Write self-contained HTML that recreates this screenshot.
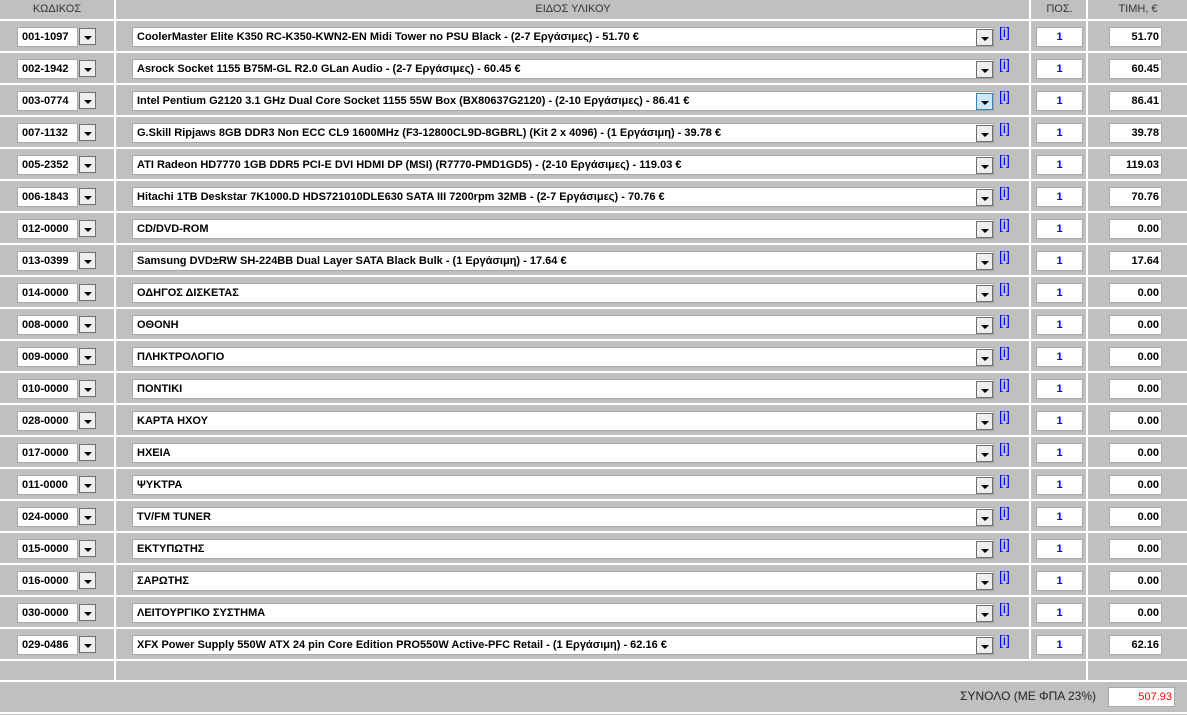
<!DOCTYPE html>
<html><head><meta charset="utf-8"><style>
*{margin:0;padding:0;box-sizing:border-box}
body{width:1187px;height:715px;background:#c0c0c0;position:relative;overflow:hidden;font-family:"Liberation Sans",Tahoma,sans-serif;font-size:11px}
.h{position:absolute;background:#fff}
.hd{position:absolute;top:3px;color:#333;font-size:11px;text-align:center}
.r{position:absolute;left:0;width:1187px;height:32px}
.c,.s,.q,.p{position:absolute;top:6px;height:20px;background:#fff;border:1px solid #a9a9a9;font-weight:bold;line-height:18px;padding-left:4px;color:#000;white-space:nowrap;overflow:hidden}
.c{left:17px;width:61px}
.b{position:absolute;left:79px;top:7px;width:17px;height:17px;background:#eee;border:1px solid #707070}
.b::after,.sb::after{content:"";position:absolute;left:4px;top:7px;border-left:4px solid transparent;border-right:4px solid transparent;border-top:4px solid #000}
.s{left:132px;width:862px}
.sb{position:absolute;left:976px;top:8px;width:17px;height:17px;background:#eee;border:1px solid #707070}
.i{position:absolute;left:999px;top:3px;color:#00f;font-size:14px}
.q{left:1036px;width:47px;text-align:center;color:#00f;padding:0}
.p{left:1109px;width:53px;text-align:right;padding:0 2px 0 0}
</style></head><body>
<div class="hd" style="left:0;width:114px">ΚΩΔΙΚΟΣ</div>
<div class="hd" style="left:116px;width:914px">ΕΙΔΟΣ ΥΛΙΚΟΥ</div>
<div class="hd" style="left:1032px;width:55px">ΠΟΣ.</div>
<div class="hd" style="left:1089px;width:98px">ΤΙΜΗ, €</div>
<div class="h" style="left:114px;top:0;width:2px;height:681px"></div>
<div class="h" style="left:1029px;top:0;width:2px;height:661px"></div>
<div class="h" style="left:1086px;top:0;width:2px;height:681px"></div>
<div class="h" style="left:0;width:1187px;top:19px;height:2px"></div>
<div class="h" style="left:0;width:1187px;top:51px;height:2px"></div>
<div class="h" style="left:0;width:1187px;top:83px;height:2px"></div>
<div class="h" style="left:0;width:1187px;top:115px;height:2px"></div>
<div class="h" style="left:0;width:1187px;top:147px;height:2px"></div>
<div class="h" style="left:0;width:1187px;top:179px;height:2px"></div>
<div class="h" style="left:0;width:1187px;top:211px;height:2px"></div>
<div class="h" style="left:0;width:1187px;top:243px;height:2px"></div>
<div class="h" style="left:0;width:1187px;top:275px;height:2px"></div>
<div class="h" style="left:0;width:1187px;top:307px;height:2px"></div>
<div class="h" style="left:0;width:1187px;top:339px;height:2px"></div>
<div class="h" style="left:0;width:1187px;top:371px;height:2px"></div>
<div class="h" style="left:0;width:1187px;top:403px;height:2px"></div>
<div class="h" style="left:0;width:1187px;top:435px;height:2px"></div>
<div class="h" style="left:0;width:1187px;top:467px;height:2px"></div>
<div class="h" style="left:0;width:1187px;top:499px;height:2px"></div>
<div class="h" style="left:0;width:1187px;top:531px;height:2px"></div>
<div class="h" style="left:0;width:1187px;top:563px;height:2px"></div>
<div class="h" style="left:0;width:1187px;top:595px;height:2px"></div>
<div class="h" style="left:0;width:1187px;top:627px;height:2px"></div>
<div class="h" style="left:0;width:1187px;top:659px;height:2px"></div>
<div class="h" style="left:0;width:1187px;top:680px;height:2px"></div>
<div class="h" style="left:0;width:1187px;top:712px;height:2px"></div>

<div class="r" style="top:21px"><div class="c">001-1097</div><div class="b"></div><div class="s">CoolerMaster Elite K350 RC-K350-KWN2-EN Midi Tower no PSU Black - (2-7 Εργάσιμες) - 51.70 €</div><div class="sb"></div><div class="i">[i]</div><div class="q">1</div><div class="p">51.70</div></div>
<div class="r" style="top:53px"><div class="c">002-1942</div><div class="b"></div><div class="s">Asrock Socket 1155 B75M-GL R2.0 GLan Audio - (2-7 Εργάσιμες) - 60.45 €</div><div class="sb"></div><div class="i">[i]</div><div class="q">1</div><div class="p">60.45</div></div>
<div class="r" style="top:85px"><div class="c">003-0774</div><div class="b"></div><div class="s">Intel Pentium G2120 3.1 GHz Dual Core Socket 1155 55W Box (BX80637G2120) - (2-10 Εργάσιμες) - 86.41 €</div><div class="sb" style="background:#cde8f8;border-color:#3c7fb1"></div><div class="i">[i]</div><div class="q">1</div><div class="p">86.41</div></div>
<div class="r" style="top:117px"><div class="c">007-1132</div><div class="b"></div><div class="s">G.Skill Ripjaws 8GB DDR3 Non ECC CL9 1600MHz (F3-12800CL9D-8GBRL) (Kit 2 x 4096) - (1 Εργάσιμη) - 39.78 €</div><div class="sb"></div><div class="i">[i]</div><div class="q">1</div><div class="p">39.78</div></div>
<div class="r" style="top:149px"><div class="c">005-2352</div><div class="b"></div><div class="s">ATI Radeon HD7770 1GB DDR5 PCI-E DVI HDMI DP (MSI) (R7770-PMD1GD5) - (2-10 Εργάσιμες) - 119.03 €</div><div class="sb"></div><div class="i">[i]</div><div class="q">1</div><div class="p">119.03</div></div>
<div class="r" style="top:181px"><div class="c">006-1843</div><div class="b"></div><div class="s">Hitachi 1TB Deskstar 7K1000.D HDS721010DLE630 SATA III 7200rpm 32MB - (2-7 Εργάσιμες) - 70.76 €</div><div class="sb"></div><div class="i">[i]</div><div class="q">1</div><div class="p">70.76</div></div>
<div class="r" style="top:213px"><div class="c">012-0000</div><div class="b"></div><div class="s">CD/DVD-ROM</div><div class="sb"></div><div class="i">[i]</div><div class="q">1</div><div class="p">0.00</div></div>
<div class="r" style="top:245px"><div class="c">013-0399</div><div class="b"></div><div class="s">Samsung DVD±RW SH-224BB Dual Layer SATA Black Bulk - (1 Εργάσιμη) - 17.64 €</div><div class="sb"></div><div class="i">[i]</div><div class="q">1</div><div class="p">17.64</div></div>
<div class="r" style="top:277px"><div class="c">014-0000</div><div class="b"></div><div class="s">ΟΔΗΓΟΣ ΔΙΣΚΕΤΑΣ</div><div class="sb"></div><div class="i">[i]</div><div class="q">1</div><div class="p">0.00</div></div>
<div class="r" style="top:309px"><div class="c">008-0000</div><div class="b"></div><div class="s">ΟΘΟΝΗ</div><div class="sb"></div><div class="i">[i]</div><div class="q">1</div><div class="p">0.00</div></div>
<div class="r" style="top:341px"><div class="c">009-0000</div><div class="b"></div><div class="s">ΠΛΗΚΤΡΟΛΟΓΙΟ</div><div class="sb"></div><div class="i">[i]</div><div class="q">1</div><div class="p">0.00</div></div>
<div class="r" style="top:373px"><div class="c">010-0000</div><div class="b"></div><div class="s">ΠΟΝΤΙΚΙ</div><div class="sb"></div><div class="i">[i]</div><div class="q">1</div><div class="p">0.00</div></div>
<div class="r" style="top:405px"><div class="c">028-0000</div><div class="b"></div><div class="s">ΚΑΡΤΑ ΗΧΟΥ</div><div class="sb"></div><div class="i">[i]</div><div class="q">1</div><div class="p">0.00</div></div>
<div class="r" style="top:437px"><div class="c">017-0000</div><div class="b"></div><div class="s">ΗΧΕΙΑ</div><div class="sb"></div><div class="i">[i]</div><div class="q">1</div><div class="p">0.00</div></div>
<div class="r" style="top:469px"><div class="c">011-0000</div><div class="b"></div><div class="s">ΨΥΚΤΡΑ</div><div class="sb"></div><div class="i">[i]</div><div class="q">1</div><div class="p">0.00</div></div>
<div class="r" style="top:501px"><div class="c">024-0000</div><div class="b"></div><div class="s">TV/FM TUNER</div><div class="sb"></div><div class="i">[i]</div><div class="q">1</div><div class="p">0.00</div></div>
<div class="r" style="top:533px"><div class="c">015-0000</div><div class="b"></div><div class="s">ΕΚΤΥΠΩΤΗΣ</div><div class="sb"></div><div class="i">[i]</div><div class="q">1</div><div class="p">0.00</div></div>
<div class="r" style="top:565px"><div class="c">016-0000</div><div class="b"></div><div class="s">ΣΑΡΩΤΗΣ</div><div class="sb"></div><div class="i">[i]</div><div class="q">1</div><div class="p">0.00</div></div>
<div class="r" style="top:597px"><div class="c">030-0000</div><div class="b"></div><div class="s">ΛΕΙΤΟΥΡΓΙΚΟ ΣΥΣΤΗΜΑ</div><div class="sb"></div><div class="i">[i]</div><div class="q">1</div><div class="p">0.00</div></div>
<div class="r" style="top:629px"><div class="c">029-0486</div><div class="b"></div><div class="s">XFX Power Supply 550W ATX 24 pin Core Edition PRO550W Active-PFC Retail - (1 Εργάσιμη) - 62.16 €</div><div class="sb"></div><div class="i">[i]</div><div class="q">1</div><div class="p">62.16</div></div>

<div style="position:absolute;left:900px;width:196px;top:689px;text-align:right;color:#222;font-size:12px">ΣΥΝΟΛΟ (ΜΕ ΦΠΑ 23%)</div>
<div class="p" style="top:687px;left:1108px;width:67px;color:#f00;font-weight:normal">507.93</div>
</body></html>
